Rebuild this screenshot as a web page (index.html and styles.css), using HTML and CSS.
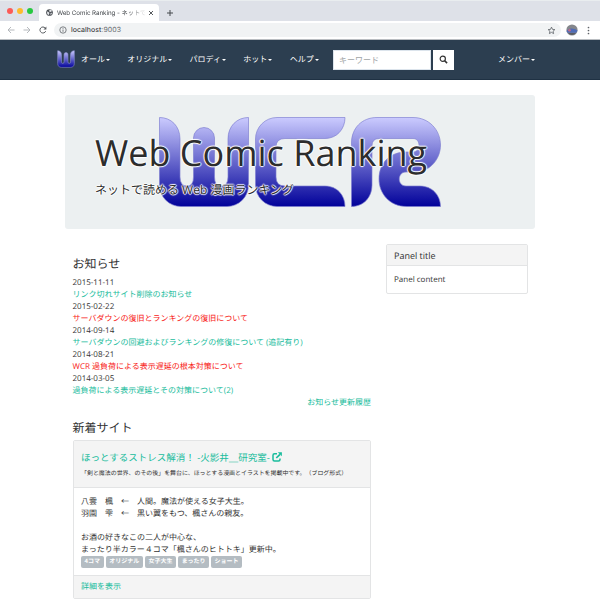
FILE: index.html
```html
<!DOCTYPE html>
<html lang="ja">
<head>
<meta charset="utf-8">
<title>Web Comic Ranking</title>
<link rel="stylesheet" href="styles.css">
</head>
<body>
<svg width="0" height="0" class="defs" aria-hidden="true">
  <defs>
    <linearGradient id="blue" x1="0" y1="0" x2="0" y2="90" gradientUnits="userSpaceOnUse">
      <stop offset="0" stop-color="#ccccff"/>
      <stop offset="1" stop-color="#000099"/>
    </linearGradient>
    <path id="w" d="M.5.5C12 .5 21 9 21 22V60Q21 69 28 69Q34.500 69 34.500 60V21A10.500 10.500 0 0 1 55.500 21V60Q55.500 69 62 69Q69 69 69 60V22C69 9 78 .5 89.500 .5V68A21.500 21.500 0 0 1 68 89.500H22A21.500 21.500 0 0 1 .5 68Z"/>
  </defs>
</svg>

<header class="browser">
  <div class="tabs">
    <div class="lights"><i class="red"></i><i class="yellow"></i><i class="green"></i></div>
    <div class="tab">
      <svg class="globe" viewBox="0 0 14 14"><circle cx="7" cy="7" r="6.700" fill="#4b4f54"/><path d="M2 5l3 1 2 2-1 2-1 2.500Q1.500 10 2 5zM7 2l3-.5 2 2-2 2.500-2-.5-2-1zM9 8l3-.5-1 3-2 1.500z" fill="#e4e6e9"/></svg>
      <span class="tab-title">Web Comic Ranking - ネットで</span>
      <svg class="close" viewBox="0 0 6 6"><path d="M1 1l4 4M5 1l-4 4" stroke="#45494d" stroke-width=".9"/></svg>
    </div>
    <svg class="plus" viewBox="0 0 8 8"><path d="M4 1v6M1 4h6" stroke="#45494d"/></svg>
  </div>
  <div class="toolbar">
    <svg class="tool" viewBox="0 0 8 8"><path d="M7.500 4H1M4 1L1 4l3 3" fill="none" stroke="#aeb1b5" stroke-width=".9"/></svg>
    <svg class="tool" viewBox="0 0 8 8"><path d="M.5 4H7M4 1l3 3-3 3" fill="none" stroke="#aeb1b5" stroke-width=".9"/></svg>
    <svg class="tool" viewBox="0 0 8 8"><path d="M6.700 5.200A3 3 0 1 1 6.200 2L7 2.800" fill="none" stroke="#55595d"/><path d="M7.400.5v3H4.500z" fill="#55595d"/></svg>
    <div class="address">
      <svg class="info" viewBox="0 0 8 8"><circle cx="4" cy="4" r="3.200" fill="none" stroke="#5f6368" stroke-width=".8"/><path d="M4 3.500v2.300M4 2v.8" stroke="#5f6368" stroke-width=".8"/></svg>
      <span class="url"><b>localhost</b>:9003</span>
      <svg class="star" viewBox="0 0 24 24"><path d="M12 3l2.700 6 6.300.6-4.800 4.300 1.400 6.400-5.600-3.400-5.600 3.400 1.400-6.400L3 9.600 9.300 9z" fill="none" stroke="#5f6368" stroke-width="2.200"/></svg>
    </div>
    <svg class="avatar" viewBox="0 0 12 12"><circle cx="6" cy="6" r="5.600" fill="#85878c"/><path d="M.5 7Q2 4 6 4.500T11.500 6.500A5.600 5.600 0 0 1 10 8.800H2Q.7 8 .5 7" fill="#506cb6"/><circle cx="3.500" cy="6.300" r="1.300" fill="#c36b88"/><path d="M2 9h8Q6 13 2 9" fill="#5b5d62"/></svg>
    <svg class="dots" viewBox="0 0 3 9"><circle cx="1.500" cy="1.500" r=".85"/><circle cx="1.500" cy="4.500" r=".85"/><circle cx="1.500" cy="7.500" r=".85"/></svg>
  </div>
</header>

<nav class="navbar">
  <svg class="brand" viewBox="-3 -3 96 96"><use href="#w" fill="url(#blue)" stroke="#8d90cf" stroke-width="3"/></svg>
  <ul class="menu">
    <li>オール<i class="caret"></i></li>
    <li>オリジナル<i class="caret"></i></li>
    <li>パロディ<i class="caret"></i></li>
    <li>ホット<i class="caret"></i></li>
    <li>ヘルプ<i class="caret"></i></li>
  </ul>
  <form class="search">
    <input type="text" placeholder="キーワード">
    <button type="button" aria-label="検索"><svg viewBox="0 0 10 10"><circle cx="4.200" cy="4.200" r="2.900" fill="none" stroke="#333" stroke-width="1.300"/><path d="M6.300 6.300L9 9" stroke="#333" stroke-width="1.700"/></svg></button>
  </form>
  <div class="member">メンバー<i class="caret"></i></div>
</nav>

<main class="container">
  <section class="hero">
    <svg class="hero-logo" viewBox="0 0 282 90">
      <g fill="url(#blue)" stroke="#7c7cd0" stroke-opacity=".65" stroke-width="1">
        <use href="#w"/>
        <path d="M186 .5C186 12 178 21.500 166 21.500H126Q117 21.500 117 30V60Q117 69 126 69H166C178 69 186 78 186 89.500H118A21.500 21.500 0 0 1 96.500 68V22A21.500 21.500 0 0 1 118 .5Z"/>
        <path d="M192.500 89.500V26C192.500 11 203 .5 218 .5H254C270 .5 281.500 13 281.500 28C281.500 42 271 55 256 55H247C238 55 238 69 247 69H261C273 69 281.500 78 281.500 89.500H248C230 89.500 220 76 220 62C220 46 231 35 247 35H254C262 35 262 21.500 254 21.500H220Q213 21.500 213 29V68C213 80 205 89.500 192.500 89.500Z"/>
      </g>
    </svg>
    <h1>Web Comic Ranking</h1>
    <p>ネットで読める Web 漫画ランキング</p>
  </section>

  <div class="row">
    <div class="main">
      <h2>お知らせ</h2>
      <dl class="news">
        <dt>2015-11-11</dt><dd><a>リンク切れサイト削除のお知らせ</a></dd>
        <dt>2015-02-22</dt><dd><a class="alert">サーバダウンの復旧とランキングの復旧について</a></dd>
        <dt>2014-09-14</dt><dd><a>サーバダウンの回避およびランキングの修復について (追記有り)</a></dd>
        <dt>2014-08-21</dt><dd><a class="alert">WCR 過負荷による表示遅延の根本対策について</a></dd>
        <dt>2014-03-05</dt><dd><a>過負荷による表示遅延とその対策について(2)</a></dd>
      </dl>
      <div class="more"><a>お知らせ更新履歴</a></div>
      <h2 class="new-title">新着サイト</h2>
      <article class="panel site">
        <div class="panel-head">
          <h3><a>ほっとするストレス解消！ -火影井＿研究室- <svg class="ext" viewBox="0 0 10 10"><path d="M5 1.800H2.500Q1 1.800 1 3.300V7.500Q1 9 2.500 9H6.500Q8 9 8 7.500V6.500" fill="none" stroke="#18bc9c" stroke-width="1.500"/><path d="M4.300 6L8 2.300" stroke="#18bc9c" stroke-width="1.700"/><path d="M5.800.2H9.900V4.300z" fill="#18bc9c"/></svg></a></h3>
          <small>「剣と魔法の世界、のその後」を舞台に、ほっとする漫画とイラストを掲載中です。（ブログ形式）</small>
        </div>
        <div class="panel-body">
          <p>八雲　楓　←　人間。魔法が使える女子大生。<br>羽園　雫　←　黒い翼をもつ、楓さんの親友。<br><br>お酒の好きなこの二人が中心な、<br>まったり半カラー４コマ「楓さんのヒトトキ」更新中。</p>
          <div class="labels"><span>4コマ</span><span>オリジナル</span><span>女子大生</span><span>まったり</span><span>ショート</span></div>
        </div>
        <div class="panel-foot"><a>詳細を表示</a></div>
      </article>
    </div>
    <aside class="panel side">
      <div class="panel-head">Panel title</div>
      <div class="panel-body">Panel content</div>
    </aside>
  </div>
</main>
</body>
</html>
```
FILE: styles.css
```css
* { box-sizing: border-box; }
body {
  margin: 0;
  height: 609px;
  overflow: hidden;
  background: #fff;
  color: #333;
  font: 8px/12px "Open Sans", "Noto Sans CJK JP", sans-serif;
  text-spacing-trim: space-all;
  text-rendering: geometricPrecision;
}
h1, h2, h3, p, ul, dl, dd { margin: 0; padding: 0; font-weight: 400; }
svg { display: block; flex: none; }
.defs { position: absolute; }
a { color: #18bc9c; }
a.alert { color: #f82015; }

/* Browser window */
.browser { height: 40px; border-bottom: 1px solid #b9bdc1; }
.tabs { display: flex; height: 21px; background: #dee1e8; border-top: 1px solid #e9edef; }
.lights { display: flex; gap: 4px; padding: 7px 0 0 7px; width: 39px; }
.lights i { width: 6px; height: 6px; border-radius: 50%; }
.red { background: #fc5b57; }
.yellow { background: #fdbb2d; }
.green { background: #27c840; }
.tab { display: flex; align-items: center; width: 120px; height: 17px; margin-top: 3px; padding: 0 5px 0 7px; background: #fff; border-radius: 4px 4px 0 0; }
.globe { width: 7px; height: 7px; }
.tab-title {
  width: 88px; margin: 0 3px 0 4px; white-space: nowrap;
  font: 6.25px/12px Inter, "Noto Sans CJK JP", sans-serif; letter-spacing: -.06px; color: #45494d;
  mask-image: linear-gradient(90deg, #000 70px, transparent 90px);
}
.close { width: 6px; height: 6px; }
.plus { width: 8px; height: 8px; margin: 8px 0 0 7px; }
.toolbar { display: flex; align-items: center; height: 18px; padding-left: 7px; }
.tool { width: 8px; height: 8px; margin-right: 8px; }
.address { display: flex; align-items: center; width: 507px; height: 14px; margin-left: -1px; padding: 0 5px; background: #f1f3f4; border-radius: 7px; }
.info { width: 8px; height: 8px; }
.url { flex: 1; margin-left: 4px; font: 7px/14px Inter, sans-serif; letter-spacing: .05px; color: #6b6f73; }
.url b { font-weight: 400; color: #202124; }
.star { width: 9px; height: 9px; }
.avatar { width: 12px; height: 12px; margin-left: 5px; }
.dots { width: 3px; height: 9px; margin-left: 9px; fill: #5f6368; }

/* Site navigation */
.navbar { display: flex; align-items: center; height: 40px; padding: 0 65px 0 57px; background: #2c3e50; border-bottom: 1px solid #1f3143; color: #fff; }
.brand { width: 18px; height: 18px; margin-top: -2px; }
.menu { display: flex; gap: 17.3px; width: 258px; margin-left: 6px; list-style: none; white-space: nowrap; }
.menu li, .member { display: flex; align-items: center; margin-top: 1px; }
.caret { width: 4px; margin-left: 1px; border: 2px solid transparent; border-top-color: #fff; border-bottom: 0; }
.search { display: flex; gap: 2px; margin-left: -6px; }
.search input { width: 98px; height: 20px; padding: 0 5px; border: 1px solid #dce4ec; background: #fff; font: inherit; }
.search input::placeholder { color: #a0a4a6; opacity: 1; }
.search button { display: flex; align-items: center; justify-content: center; width: 21px; height: 20px; padding: 0; border: 0; background: #fff; }
.search button svg { width: 9px; height: 9px; }
.member { margin-left: auto; }

/* Page */
.container { width: 470px; margin: 15px auto 0; }
.hero { position: relative; height: 134px; padding: 34px 30px; background: #ecf0f1; border-radius: 3px; color: #2d2d2d; }
.hero-logo { position: absolute; left: 94px; top: 22px; width: 282px; height: 90px; }
.hero h1, .hero p { position: relative; white-space: nowrap; text-shadow: 1px 0 1px #fff, -1px 0 1px #fff, 0 1px 1px #fff, 0 -1px 1px #fff; }
.hero h1 { font-size: 36px; line-height: 48px; }
.hero p { margin-top: 4px; font-size: 12px; line-height: 18px; }
.row { display: flex; justify-content: space-between; align-items: flex-start; margin-top: 15px; padding: 0 7.5px; }
.main { width: 298.5px; padding-top: 13px; }
h2 { font-size: 12px; line-height: 14px; margin-bottom: 6px; }
.news { white-space: nowrap; }
.more { text-align: right; margin-bottom: 12px; }
.new-title { margin-bottom: 5px; }
.panel { border: 1px solid #e3e4e5; border-radius: 2px; background: #fff; }
.panel-head { background: #f4f4f4; border-bottom: 1px solid #e3e4e5; padding: 5px 7.5px; }
.panel-body { padding: 7.5px; }
.panel-foot { background: #f4f4f4; border-top: 1px solid #e3e4e5; padding: 5px 7.5px; }
.side { width: 142px; }
.side .panel-head { height: 21px; font-size: 9px; line-height: 12px; }
.side .panel-body { height: 27px; padding-top: 8px; }
.site .panel-head { height: 47px; padding-top: 11px; white-space: nowrap; }
.site h3 { font-size: 9.5px; line-height: 12px; }
.site small { display: block; margin-top: 3px; font-size: 5.95px; line-height: 12px; }
.site .panel-body { height: 87px; padding-top: 8px; padding-bottom: 0; }
.ext { display: inline-block; width: 10px; height: 10px; vertical-align: -1px; }
.labels { display: flex; gap: 2px; }
.labels span { height: 11.5px; padding: 0 3.6px; border-radius: 2px; background: #b4bcc2; color: #fff; font-size: 6px; font-weight: 700; line-height: 11px; white-space: nowrap; }
```
